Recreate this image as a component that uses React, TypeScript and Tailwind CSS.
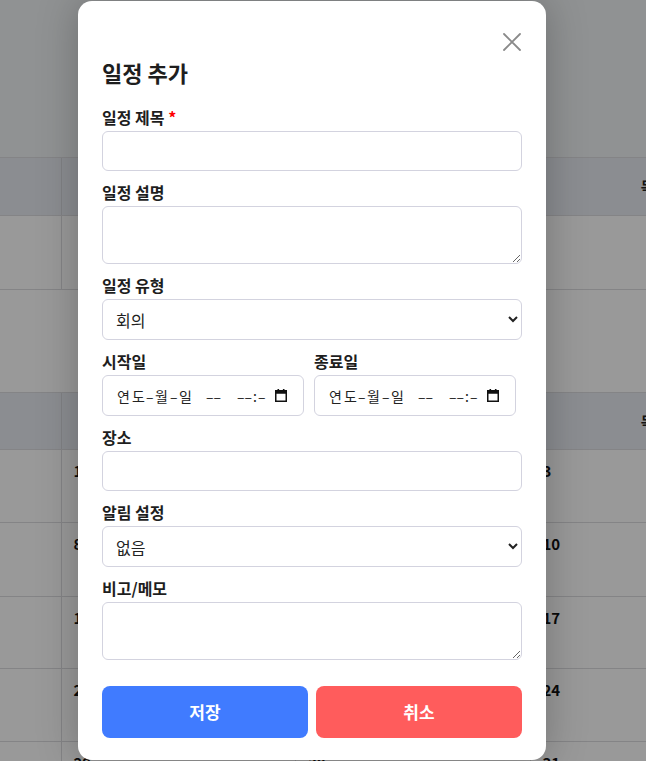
import React from "react";

const font = { fontFamily: '"Noto Sans CJK KR", "Noto Sans", sans-serif' };

const fieldCls =
    "block w-full rounded-[6px] border border-[#d3d3df] bg-white px-3 text-[16px] text-[#222] outline-none";

const CloseIcon = () => (
    <svg width="20" height="20" viewBox="0 0 20 20" fill="none">
        <path d="M2 2 L18 18 M18 2 L2 18" stroke="#8a8a8a" strokeWidth="1.8" strokeLinecap="round" />
    </svg>
);

const CalendarIcon = () => (
    <svg width="12" height="13" viewBox="0 0 12 13" className="ml-auto">
        <rect x="2.5" y="0" width="1.6" height="3" fill="#111" />
        <rect x="7.9" y="0" width="1.6" height="3" fill="#111" />
        <rect x="0.75" y="1.75" width="10.5" height="10.5" fill="none" stroke="#111" strokeWidth="1.5" />
        <rect x="0.75" y="1.75" width="10.5" height="3" fill="#111" />
    </svg>
);

const Label = ({ children, required }: { children: React.ReactNode; required?: boolean }) => (
    <label className="mb-[3px] block text-[16px] font-bold leading-[22px] text-[#1e1e1e]">
        {children}
        {required && <span className="text-[#ff0000]"> *</span>}
    </label>
);

// imitates the native datetime-local placeholder (Korean locale)
const DateField = () => (
    <div className="flex h-[41px] w-full items-center rounded-[6px] border border-[#d3d3df] bg-white pl-[14px] pr-[16px] text-[14px] leading-none text-[#222]">
        <span className="inline-block w-[15px]">연</span>
        <span className="inline-block w-[14px]">도</span>
        <span className="inline-block w-[9px]">–</span>
        <span className="inline-block w-[15px]">월</span>
        <span className="inline-block w-[9px]">–</span>
        <span className="inline-block w-[27px]">일</span>
        <span className="inline-block w-[31px]">––</span>
        <span className="inline-block w-[16px]">––</span>
        <span className="inline-block w-[5px]">:</span>
        <span className="inline-block">–</span>
        <CalendarIcon />
    </div>
);

// background calendar behind the overlay
const HeaderRow = ({ h }: { h: string }) => (
    <div className={`ml-[-173px] grid grid-cols-[234.5px_234.5px_234.5px_234.5px] border-b border-[#dcdde0] bg-[#e8ecf2] ${h}`}>
        {["월", "화", "수", "목"].map((d) => (
            <div key={d} className="flex items-center justify-center border-r border-[#d6d8dc] text-[14px] font-bold text-[#222]">
                {d}
            </div>
        ))}
    </div>
);

const WeekRow = ({ days, h }: { days: string[]; h: string }) => (
    <div className={`ml-[-173px] grid grid-cols-[234.5px_234.5px_234.5px_234.5px] border-b border-[#dcdde0] bg-white ${h}`}>
        {days.map((d, i) => (
            <div key={i} className="border-r border-[#dcdde0] px-3 pt-[10px] text-[15px] font-bold leading-[22px] text-[#111]">
                {d}
            </div>
        ))}
    </div>
);

export default function App() {
    return (
        <div className="relative h-[761px] w-[646px] overflow-hidden bg-[#f1f3f6]" style={font}>
            <div className="h-[157px]" />
            <div className="border-t border-[#dcdde0]">
                <HeaderRow h="h-[58px]" />
                <WeekRow days={["", "", "", ""]} h="h-[74px]" />
                <div className="h-[103px] border-b border-[#dcdde0] bg-white" />
                <HeaderRow h="h-[57px]" />
                <WeekRow days={["", "1", "2", "3"]} h="h-[73px]" />
                <WeekRow days={["7", "8", "9", "10"]} h="h-[74px]" />
                <WeekRow days={["14", "15", "16", "17"]} h="h-[72px]" />
                <WeekRow days={["21", "22", "23", "24"]} h="h-[73px]" />
                <WeekRow days={["28", "29", "30", "31"]} h="h-[74px]" />
            </div>

            <div className="absolute inset-0 flex bg-black/40 pl-[78px] pt-[1px]">
                <div className="flex h-[759px] w-[468px] flex-col rounded-[14px] bg-white px-6 pt-[31px] shadow-[0_0_40px_rgba(0,0,0,0.25)]">
                    <div className="flex justify-end">
                        <button className="h-5 w-5">
                            <CloseIcon />
                        </button>
                    </div>
                    <h2 className="mt-[5px] mb-[19px] text-[22px] font-bold leading-[30px] text-[#1e1e1e]">일정 추가</h2>

                    <div className="mb-[10px]">
                        <Label required>일정 제목</Label>
                        <input className={`${fieldCls} h-[40px]`} />
                    </div>

                    <div className="mb-[10px]">
                        <Label>일정 설명</Label>
                        <textarea className={`${fieldCls} h-[58px] py-2`} />
                    </div>

                    <div className="mb-[10px]">
                        <Label>일정 유형</Label>
                        <select className={`${fieldCls} h-[41px] !pl-[9px]`} defaultValue="회의">
                            <option>회의</option>
                            <option>업무</option>
                            <option>개인</option>
                        </select>
                    </div>

                    <div className="mb-[10px] flex gap-[10px]">
                        <div className="w-[202px]">
                            <Label>시작일</Label>
                            <DateField />
                        </div>
                        <div className="w-[202px]">
                            <Label>종료일</Label>
                            <DateField />
                        </div>
                    </div>

                    <div className="mb-[10px]">
                        <Label>장소</Label>
                        <input className={`${fieldCls} h-[40px]`} />
                    </div>

                    <div className="mb-[10px]">
                        <Label>알림 설정</Label>
                        <select className={`${fieldCls} h-[41px] !pl-[9px]`} defaultValue="없음">
                            <option>없음</option>
                            <option>10분 전</option>
                            <option>1시간 전</option>
                        </select>
                    </div>

                    <div>
                        <Label>비고/메모</Label>
                        <textarea className={`${fieldCls} h-[58px] py-2`} />
                    </div>

                    <div className="mt-[26px] flex gap-2">
                        <button className="h-[52px] flex-1 rounded-[8px] bg-[#407bff] text-[17px] font-bold text-white">저장</button>
                        <button className="h-[52px] flex-1 rounded-[8px] bg-[#ff5c5c] text-[17px] font-bold text-white">취소</button>
                    </div>
                </div>
            </div>
        </div>
    );
}
